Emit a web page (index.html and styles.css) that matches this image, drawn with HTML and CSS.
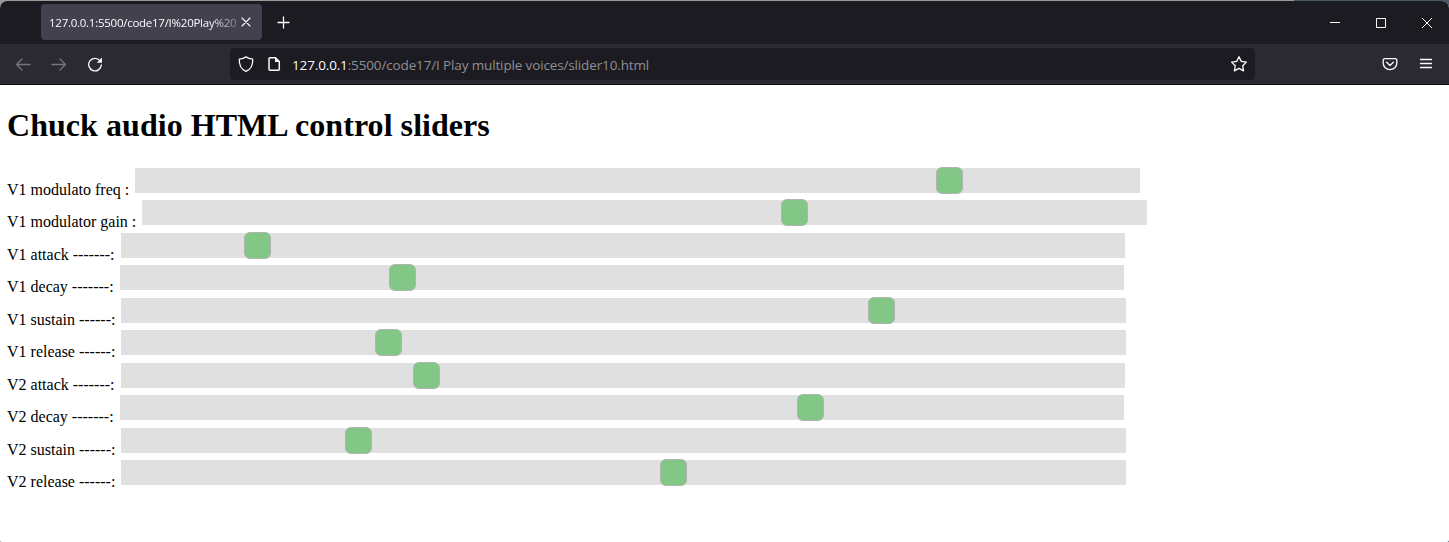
FILE: index.html
```html
<!DOCTYPE html>
<html lang="en">
<head>
<meta charset="utf-8">
<title>Chuck audio HTML control sliders</title>
<link rel="stylesheet" href="styles.css">
</head>
<body>
<div class="window">
  <header class="tabbar">
    <div class="tab">
      <span class="tab-title">127.0.0.1:5500/code17/I%20Play%20</span>
      <svg class="tab-close" width="10" height="10" viewBox="0 0 10 10"><path d="M1 1l8 8M9 1l-8 8"/></svg>
    </div>
    <svg class="new-tab" width="13" height="13" viewBox="0 0 13 13"><path d="M6.5 1v11M1 6.5h11"/></svg>
    <div class="controls">
      <svg width="12" height="12" viewBox="0 0 12 12"><path d="M1 5.5h10"/></svg>
      <svg width="12" height="12" viewBox="0 0 12 12"><path d="M1.5 1.5h9v9h-9z"/></svg>
      <svg width="12" height="12" viewBox="0 0 12 12"><path d="M1 1l10 10M11 1L1 11"/></svg>
    </div>
  </header>
  <nav class="toolbar">
    <div class="nav-buttons">
      <svg class="dim" width="16" height="16" viewBox="0 0 16 16"><path d="M15 8.500H1.600M7 3L1.500 8.500L7 14"/></svg>
      <svg class="dim" width="16" height="16" viewBox="0 0 16 16"><path d="M1 8.500h13.400M9 3l5.500 5.500L9 14"/></svg>
      <svg width="16" height="16" viewBox="0 0 16 16"><path d="M12.900 4.600A6.300 6.300 0 1 0 14.300 9"/><path class="solid" d="M15 1.500v5.200H9.800z"/></svg>
    </div>
    <div class="urlbar">
      <svg width="16" height="16" viewBox="0 0 16 16"><path d="M8 .9C6.200 2.200 3.700 2.900 1.300 3.100C1 8.700 3.200 13.400 8 15.300C12.800 13.400 15 8.700 14.700 3.100C12.300 2.900 9.800 2.200 8 .9z"/></svg>
      <svg class="page-icon" width="14" height="16" viewBox="0 0 14 16"><path d="M3 1.700h5.500l3.800 3.800v7.800a1 1 0 0 1-1 1H3a1 1 0 0 1-1-1V2.700a1 1 0 0 1 1-1z"/><path class="solid" d="M8 1.500l4.500 4.500H8z"/></svg>
      <span class="url"><b>127.0.0.1</b>:5500/code17/I Play multiple voices/slider10.html</span>
      <svg class="star" width="18" height="18" viewBox="0 0 18 18"><path d="M9 1.700l2.300 4.700 5.100.7-3.700 3.600.9 5.200L9 13.400l-4.600 2.500.9-5.200L1.600 7.100l5.100-.7z"/></svg>
    </div>
    <div class="menu-buttons">
      <svg width="16" height="16" viewBox="0 0 16 16"><path d="M2.600 2.700h10.800a1.400 1.400 0 0 1 1.400 1.400v3.200a6.800 6.400 0 0 1-13.600 0V4.100a1.400 1.400 0 0 1 1.400-1.400z"/><path d="M4.700 6.300L8 9.500l3.300-3.200"/></svg>
      <svg width="16" height="16" viewBox="0 0 16 16"><path d="M2.500 3.500h11M2.500 7.500h11M2.500 11.500h11"/></svg>
    </div>
  </nav>
  <main class="page">
    <h1>Chuck audio HTML control sliders</h1>
    <div class="sliders">
      <div class="row"><label class="freq">V1 modulato freq :</label><div class="track"><i class="thumb" style="left:801px"></i></div></div>
      <div class="row tall"><label class="gain">V1 modulator gain :</label><div class="track"><i class="thumb" style="left:639px"></i></div></div>
      <div class="row"><label>V1 attack -------:</label><div class="track narrow"><i class="thumb" style="left:123px"></i></div></div>
      <div class="row tall"><label class="decay">V1 decay -------:</label><div class="track narrow"><i class="thumb" style="left:269px"></i></div></div>
      <div class="row"><label>V1 sustain ------:</label><div class="track"><i class="thumb" style="left:747px"></i></div></div>
      <div class="row tall"><label>V1 release ------:</label><div class="track"><i class="thumb" style="left:254px"></i></div></div>
      <div class="row"><label>V2 attack -------:</label><div class="track narrow"><i class="thumb" style="left:292px"></i></div></div>
      <div class="row tall"><label class="decay">V2 decay -------:</label><div class="track narrow"><i class="thumb" style="left:677px"></i></div></div>
      <div class="row"><label>V2 sustain ------:</label><div class="track"><i class="thumb" style="left:224px"></i></div></div>
      <div class="row tall"><label>V2 release ------:</label><div class="track"><i class="thumb" style="left:539px"></i></div></div>
    </div>
  </main>
</div>
</body>
</html>
```
FILE: styles.css
```css
* { box-sizing: border-box; }
body { margin: 0; background: linear-gradient(90deg, #999b99 1294px, #4a5963 1294px); }
.window { display: flex; flex-direction: column; height: 541px; margin-top: 1px; overflow: hidden; background: #fff; border-radius: 7px 7px 2px 2px; }
svg { display: block; flex: none; fill: none; stroke: #fbfbfe; stroke-width: 1.3; stroke-linejoin: round; stroke-linecap: round; }
svg .solid { fill: #fbfbfe; stroke: none; }

.tabbar { display: flex; align-items: center; flex: none; height: 43px; padding-left: 41px; background: #1c1b22; }
.tab { display: flex; align-items: center; width: 221px; height: 36px; margin-bottom: 1px; padding: 0 11px 0 8px; border-radius: 4px; background: #42414d; }
.tab-title { flex: 1; white-space: nowrap; font: 11.5px "Open Sans", sans-serif; letter-spacing: -0.26px; color: #fbfbfe; mask-image: linear-gradient(90deg, #000 160px, transparent 200px); }
.tab-close { stroke-width: 1.1; }
.new-tab { margin: 0 0 1px 15px; }
.controls { display: flex; gap: 34px; margin: 0 16px 0 auto; }
.controls svg { stroke-width: 1; stroke-linecap: butt; stroke-linejoin: miter; }

.toolbar { display: flex; align-items: center; flex: none; height: 41px; background: #2b2a33; border-bottom: 1px solid #0c0c0d; }
.nav-buttons { display: flex; gap: 20px; width: 230px; padding-left: 15px; }
.nav-buttons .dim { stroke: #77767d; }
.urlbar { display: flex; align-items: center; width: 1025px; height: 32px; padding: 0 7px 0 8px; border-radius: 4px; background: #1c1b22; }
.page-icon { margin-left: 13px; stroke-width: 1.5; }
.url { margin: 1px 0 0 11px; white-space: nowrap; font: 13.5px "Open Sans", sans-serif; letter-spacing: -0.14px; color: #8f8f94; }
.url b { font-weight: 400; color: #fbfbfe; }
.star { margin-left: auto; }
.menu-buttons { display: flex; gap: 20px; margin: 0 15px 0 auto; }

.page { flex: 1; padding: 0 7px; font-family: "Liberation Serif", "Times New Roman", serif; font-size: 16px; color: #000; }
h1 { margin: 22px 0 24px; font-size: 32px; line-height: 37px; letter-spacing: 0.05px; }
.row { display: flex; height: 32px; }
.row.tall { height: 33px; }
label { width: 114px; padding-top: 13px; line-height: 18px; white-space: nowrap; }
label.freq { width: 128px; }
label.gain { width: 135px; }
label.decay { width: 113px; }
.track { position: relative; width: 1005px; height: 25px; background: #e0e0e0; }
.track.narrow { width: 1004px; }
.thumb { position: absolute; top: -1px; width: 27px; height: 27px; border: 1px solid #b1b5b1; border-radius: 6px; background: #82c785; }
```
